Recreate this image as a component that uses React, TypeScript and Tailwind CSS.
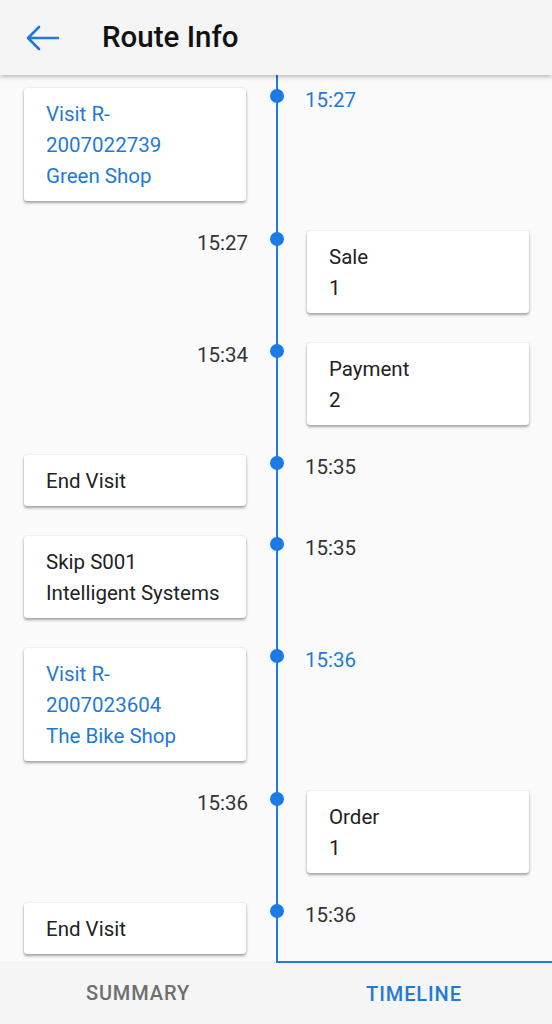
import React from "react";

type Item = {
  side: "left" | "right";
  lines: string[];
  time: string;
  blue?: boolean;
};

const items: Item[] = [
  { side: "left", lines: ["Visit R-", "2007022739", "Green Shop"], time: "15:27", blue: true },
  { side: "right", lines: ["Sale", "1"], time: "15:27" },
  { side: "right", lines: ["Payment", "2"], time: "15:34" },
  { side: "left", lines: ["End Visit"], time: "15:35" },
  { side: "left", lines: ["Skip S001", "Intelligent Systems"], time: "15:35" },
  { side: "left", lines: ["Visit R-", "2007023604", "The Bike Shop"], time: "15:36", blue: true },
  { side: "right", lines: ["Order", "1"], time: "15:36" },
  { side: "left", lines: ["End Visit"], time: "15:36" },
];

function Card({ item }: { item: Item }) {
  return (
    <div
      className={`w-[222px] rounded-[3px] bg-white px-[22px] pt-[11px] pb-[9px] text-[20.5px] leading-[31px] shadow-[0_2px_3px_rgba(0,0,0,0.35),0_0_2px_rgba(0,0,0,0.12)] ${
        item.blue ? "text-[#1f7ad6]" : "text-[#222222]"
      }`}
    >
      {item.lines.map((l, i) => (
        <div key={i} className="whitespace-nowrap">
          {l}
        </div>
      ))}
    </div>
  );
}

function Time({ item, align }: { item: Item; align: "left" | "right" }) {
  return (
    <div
      className={`text-[20.5px] leading-[24px] ${
        item.blue ? "text-[#1f7ad6]" : "text-[#333333]"
      } ${align === "right" ? "text-right" : "text-left"}`}
    >
      {item.time}
    </div>
  );
}

function Row({ item, first }: { item: Item; first: boolean }) {
  const pt = first ? "pt-[13px]" : "";
  return (
    <div className="flex">
      <div className={`w-[276px] shrink-0 pb-[30px] ${pt}`}>
        {item.side === "left" ? (
          <div className="pl-[24px]">
            <Card item={item} />
          </div>
        ) : (
          <div className="flex justify-end pr-[28px]">
            <Time item={item} align="right" />
          </div>
        )}
      </div>
      <div className={`relative flex-1 border-l-2 border-[#1a7ae8] pb-[30px] ${pt}`}>
        <div
          className={`absolute left-[-8px] h-[14px] w-[14px] rounded-full bg-[#1a7ae8] ${
            first ? "top-[14px]" : "top-[1px]"
          }`}
        />
        {item.side === "right" ? (
          <div className="pl-[29px]">
            <Card item={item} />
          </div>
        ) : (
          <div className="pl-[27px]">
            <Time item={item} align="left" />
          </div>
        )}
      </div>
    </div>
  );
}

export default function App() {
  return (
    <div
      className="flex h-[1024px] w-[552px] flex-col overflow-hidden bg-[#fafafa]"
      style={{ fontFamily: "Roboto, 'Noto Sans', sans-serif" }}
    >
      <div className="relative z-10 flex h-[75px] shrink-0 items-center bg-[#f5f5f5] shadow-[0_2px_4px_rgba(0,0,0,0.25)]">
        <div className="ml-[24px] flex h-[32px] w-[36px] items-center">
          <svg width="36" height="28" viewBox="0 0 36 28" fill="none">
            <path
              d="M34 14H4M15 3L4 14l11 11"
              stroke="#1f7ad6"
              strokeWidth="2.6"
              strokeLinecap="round"
              strokeLinejoin="round"
            />
          </svg>
        </div>
        <div className="ml-[42px] text-[29.5px] font-medium text-[#111111]">Route Info</div>
      </div>
      <div className="relative h-[886px] shrink-0 overflow-hidden">
        {items.map((it, i) => (
          <Row key={i} item={it} first={i === 0} />
        ))}
      </div>
      <div className="relative flex h-[63px] shrink-0 bg-[#f5f5f5]">
        <div className="flex w-[276px] items-center justify-center text-[20px] font-medium tracking-[0.9px] text-[#6f6f6f]">
          SUMMARY
        </div>
        <div className="flex flex-1 items-center justify-center border-t-2 border-[#1a7ae8] text-[20px] font-medium tracking-[0.9px] text-[#1f7ad6]">
          TIMELINE
        </div>
      </div>
    </div>
  );
}
